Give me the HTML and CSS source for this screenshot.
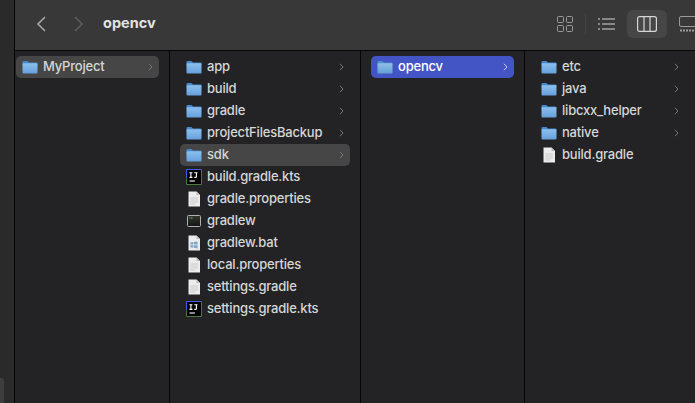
FILE: index.html
```html
<!DOCTYPE html>
<html lang="en">
<head>
<meta charset="utf-8">
<title>opencv</title>
<link rel="stylesheet" href="styles.css">
</head>
<body>
<svg class="defs" width="0" height="0" aria-hidden="true">
  <defs>
    <linearGradient id="fg" x1="0" y1="0" x2="0" y2="1">
      <stop offset="0" stop-color="#8cc0ee"/>
      <stop offset="1" stop-color="#659fdc"/>
    </linearGradient>
    <linearGradient id="fs" x1="0" y1="0" x2="0" y2="1">
      <stop offset="0" stop-color="#8fbfe8"/>
      <stop offset="1" stop-color="#64a0d6"/>
    </linearGradient>
    <linearGradient id="tg" x1="0" y1="0" x2="0" y2="1">
      <stop offset="0" stop-color="#33372f"/>
      <stop offset="1" stop-color="#141514"/>
    </linearGradient>
    <symbol id="folder" viewBox="0 0 16 14">
      <path d="M1.5 1h4l1.4 1.5h7.6a1 1 0 0 1 1 1V4H.5V2a1 1 0 0 1 1-1z" fill="#4688cc"/>
      <rect x=".5" y="3.2" width="15" height="10.3" rx="1" fill="url(#fg)"/>
    </symbol>
    <symbol id="folder-sel" viewBox="0 0 16 14">
      <path d="M1.5 1h4l1.4 1.5h7.6a1 1 0 0 1 1 1V4H.5V2a1 1 0 0 1 1-1z" fill="#4f8fcf"/>
      <rect x=".5" y="3.2" width="15" height="10.3" rx="1" fill="url(#fs)"/>
    </symbol>
    <symbol id="doc" viewBox="0 0 16 16">
      <path d="M2.5 .5h8l3.5 3.5v11.5H2.5z" fill="#ececec"/>
      <path d="M10.5 .5V4H14z" fill="#bdbdbd"/>
      <path d="M4.3 7h7.6M4.3 9h7.6M4.3 11h7.6M4.3 13h5" stroke="#c8c8c8" stroke-width=".9"/>
    </symbol>
    <symbol id="bat" viewBox="0 0 16 16">
      <path d="M2.5 .5h8l3.5 3.5v11.5H2.5z" fill="#ececec"/>
      <path d="M10.5 .5V4H14z" fill="#bdbdbd"/>
      <path d="M4.4 7.6l3-.5v2.5h-3zM8 7l3.6-.6v3.2H8zM4.4 10.2h3v2.5l-3-.5zM8 10.2h3.6v3.2L8 12.8z" fill="#7ea6c8"/>
    </symbol>
    <symbol id="idea" viewBox="0 0 16 16">
      <rect x=".5" y=".5" width="15" height="15" fill="#000"/>
      <path d="M.5 9.5V.5h15v9" fill="none" stroke="#3f5de0"/>
      <path d="M.5 9.5v6h15v-6" fill="none" stroke="#4c7a3a"/>
      <path d="M3.5 12h5.4" stroke="#fff" stroke-width="1.1"/>
      <path d="M3.4 3.8h3M4.9 3.8v4.6M3.4 8.4h3M8.3 3.8h3.2M10.4 3.8v3.6q0 1-1 1H8.3" fill="none" stroke="#fff" stroke-width="1.1"/>
    </symbol>
    <symbol id="term" viewBox="0 0 16 16">
      <rect x="1.5" y="2.5" width="13" height="11" rx="1" fill="url(#tg)" stroke="#b0b0b0"/>
      <path d="M3.5 5h3.5" stroke="#7fbf7f" stroke-width=".9" stroke-dasharray="1 .5"/>
    </symbol>
    <symbol id="chev" viewBox="0 0 5 8">
      <path d="M1 .8L4 4 1 7.2" fill="none" stroke="currentColor" stroke-width="1"/>
    </symbol>
  </defs>
</svg>

<div class="window">
  <aside class="sidebar"><div class="side-tab"></div></aside>
  <main class="main">
    <header class="toolbar">
      <svg class="nav back" viewBox="0 0 10 16" width="10" height="16"><path d="M9 1L2 8l7 7" fill="none" stroke="#a6a6a6" stroke-width="1.6"/></svg>
      <svg class="nav forward" viewBox="0 0 10 16" width="10" height="16"><path d="M1 1l7 7-7 7" fill="none" stroke="#5c5c5c" stroke-width="1.6"/></svg>
      <h1 class="title">opencv</h1>
      <div class="views">
        <svg class="view-icon" width="16" height="16" viewBox="0 0 16 16"><g fill="none" stroke="#9a9a9a"><rect x=".5" y=".5" width="6" height="6" rx="1"/><rect x="9.5" y=".5" width="6" height="6" rx="1"/><rect x=".5" y="9.5" width="6" height="6" rx="1"/><rect x="9.5" y="9.5" width="6" height="6" rx="1"/></g></svg>
        <span class="view-sep"></span>
        <svg class="view-icon list" width="17" height="12" viewBox="0 0 17 12"><path d="M4 1h13M4 6h13M4 11h13" stroke="#a0a0a0" stroke-width="1.3"/><path d="M0 1h2M0 6h2M0 11h2" stroke="#a0a0a0" stroke-width="1.5"/></svg>
        <span class="view-active"><svg width="20" height="16" viewBox="0 0 20 16"><g fill="none" stroke="#d6d6d6" stroke-width="1.2"><rect x=".6" y=".6" width="18.8" height="14.8" rx="2"/><path d="M7 .6v14.8M13 .6v14.8"/></g></svg></span>
        <svg class="view-icon gallery" width="20" height="16" viewBox="0 0 20 16"><rect x=".5" y=".5" width="24" height="10" rx="1.5" fill="none" stroke="#9a9a9a"/><path d="M1 14.5h19" stroke="#9a9a9a" stroke-width="2" stroke-dasharray="2 1"/></svg>
      </div>
    </header>
    <div class="columns">
      <section class="col col-1">
        <div class="row row-dim"><svg class="ic"><use href="#folder"/></svg><span class="name">MyProject</span><svg class="chev"><use href="#chev"/></svg></div>
      </section>
      <section class="col col-2">
        <div class="row"><svg class="ic"><use href="#folder"/></svg><span class="name">app</span><svg class="chev"><use href="#chev"/></svg></div>
        <div class="row"><svg class="ic"><use href="#folder"/></svg><span class="name">build</span><svg class="chev"><use href="#chev"/></svg></div>
        <div class="row"><svg class="ic"><use href="#folder"/></svg><span class="name">gradle</span><svg class="chev"><use href="#chev"/></svg></div>
        <div class="row"><svg class="ic"><use href="#folder"/></svg><span class="name">projectFilesBackup</span><svg class="chev"><use href="#chev"/></svg></div>
        <div class="row row-dim"><svg class="ic"><use href="#folder"/></svg><span class="name">sdk</span><svg class="chev"><use href="#chev"/></svg></div>
        <div class="row"><svg class="ic"><use href="#idea"/></svg><span class="name">build.gradle.kts</span></div>
        <div class="row"><svg class="ic"><use href="#doc"/></svg><span class="name">gradle.properties</span></div>
        <div class="row"><svg class="ic"><use href="#term"/></svg><span class="name">gradlew</span></div>
        <div class="row"><svg class="ic"><use href="#bat"/></svg><span class="name">gradlew.bat</span></div>
        <div class="row"><svg class="ic"><use href="#doc"/></svg><span class="name">local.properties</span></div>
        <div class="row"><svg class="ic"><use href="#doc"/></svg><span class="name">settings.gradle</span></div>
        <div class="row"><svg class="ic"><use href="#idea"/></svg><span class="name">settings.gradle.kts</span></div>
      </section>
      <section class="col col-3">
        <div class="row row-sel"><svg class="ic"><use href="#folder-sel"/></svg><span class="name">opencv</span><svg class="chev"><use href="#chev"/></svg></div>
      </section>
      <section class="col col-4">
        <div class="row"><svg class="ic"><use href="#folder"/></svg><span class="name">etc</span><svg class="chev"><use href="#chev"/></svg></div>
        <div class="row"><svg class="ic"><use href="#folder"/></svg><span class="name">java</span><svg class="chev"><use href="#chev"/></svg></div>
        <div class="row"><svg class="ic"><use href="#folder"/></svg><span class="name">libcxx_helper</span><svg class="chev"><use href="#chev"/></svg></div>
        <div class="row"><svg class="ic"><use href="#folder"/></svg><span class="name">native</span><svg class="chev"><use href="#chev"/></svg></div>
        <div class="row"><svg class="ic"><use href="#doc"/></svg><span class="name">build.gradle</span></div>
      </section>
    </div>
  </main>
</div>
</body>
</html>
```

FILE: styles.css
```css
* { box-sizing: border-box; }
html, body { margin: 0; height: 100%; overflow: hidden; }
body {
  background: #232325;
  font-family: "Inter", "Liberation Sans", sans-serif;
  color: #d6d6d6;
}
.defs { display: block; width: 0; height: 0; overflow: hidden; }
.window { display: flex; width: 695px; height: 403px; }
.sidebar {
  width: 15px;
  flex: none;
  background: #2a2a2b;
  border-right: 1px solid #050505;
  display: flex;
  flex-direction: column;
  justify-content: flex-end;
}
.side-tab { width: 4px; height: 25px; background: #3d3d3d; border-top-right-radius: 3px; }
.main { flex: 1; min-width: 0; display: flex; flex-direction: column; }
.toolbar {
  height: 51px;
  flex: none;
  display: flex;
  align-items: center;
  background: #383838;
  border-bottom: 1px solid #070707;
  padding: 0 0 3px 21px;
}
.nav { flex: none; }
.forward { margin-left: 28px; }
.title {
  margin: 0 0 0 19px;
  font-size: 14.5px;
  font-weight: 700;
  color: #e3e3e3;
  line-height: 1;
}
.views { margin-left: auto; display: flex; align-items: center; margin-right: -4px; }
.view-sep { width: 1px; height: 20px; background: #444; margin: 0 12px; }
.view-icon { flex: none; display: block; overflow: hidden; }
.view-active {
  width: 40px;
  height: 28px;
  margin: 0 12px 0 12px;
  border-radius: 6px;
  background: #464646;
  display: flex;
  align-items: center;
  justify-content: center;
}
.columns { flex: 1; display: flex; min-height: 0; }
.col {
  flex: none;
  padding-top: 5px;
  border-right: 1px solid #050505;
}
.col-1 { width: 155px; padding-left: 1px; padding-right: 10px; }
.col-2 { width: 191px; padding-left: 10px; padding-right: 10px; }
.col-3 { width: 164px; padding-left: 10px; padding-right: 10px; }
.col-4 { flex: 1; border-right: 0; padding-left: 10px; padding-right: 10px; }
.row {
  height: 22px;
  display: flex;
  align-items: center;
  padding: 0 6px;
  border-radius: 5px;
  font-size: 13px;
  font-weight: 500;
  letter-spacing: -0.2px;
}
.row-dim { background: #464646; }
.row-sel { background: #4355c4; color: #fff; }
.ic { width: 16px; height: 16px; flex: none; }
.name { margin-left: 5px; flex: 1; white-space: nowrap; padding-bottom: 2px; }
.chev { width: 5px; height: 8px; flex: none; color: #767676; }
.row-sel .chev { color: #c9cff0; }
```
